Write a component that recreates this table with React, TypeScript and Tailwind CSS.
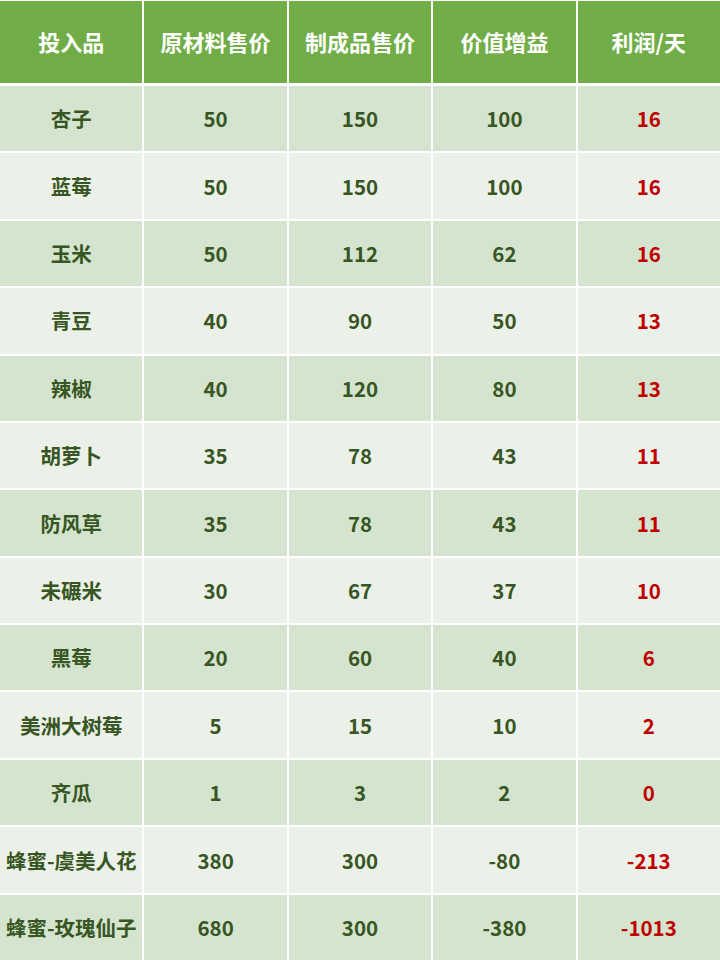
const headers = ["投入品", "原材料售价", "制成品售价", "价值增益", "利润/天"];

const rows: [string, number, number, number, number][] = [
  ["杏子", 50, 150, 100, 16],
  ["蓝莓", 50, 150, 100, 16],
  ["玉米", 50, 112, 62, 16],
  ["青豆", 40, 90, 50, 13],
  ["辣椒", 40, 120, 80, 13],
  ["胡萝卜", 35, 78, 43, 11],
  ["防风草", 35, 78, 43, 11],
  ["未碾米", 30, 67, 37, 10],
  ["黑莓", 20, 60, 40, 6],
  ["美洲大树莓", 5, 15, 10, 2],
  ["齐瓜", 1, 3, 2, 0],
  ["蜂蜜-虞美人花", 380, 300, -80, -213],
  ["蜂蜜-玫瑰仙子", 680, 300, -380, -1013],
];

export default function App() {
  return (
    <main
      className="flex h-[960px] w-[720px] flex-col bg-white pt-[1px] font-bold"
      style={{ fontFamily: '"Noto Sans CJK SC", "Noto Sans", sans-serif' }}
    >
      <div className="grid h-[82px] grid-cols-5 gap-x-[2px]">
        {headers.map((h) => (
          <div
            key={h}
            className="flex items-center justify-center bg-[#70ad47] pb-[2px] text-[22px] text-white"
          >
            {h}
          </div>
        ))}
      </div>

      <div className="mt-[3px] grid flex-1 grid-cols-5 grid-rows-[repeat(13,1fr)] gap-[2px]">
        {rows.map((row, i) =>
          row.map((cell, j) => (
            <div
              key={`${i}-${j}`}
              className={`flex items-center justify-center text-[20.5px] ${
                i % 2 === 0 ? "bg-[#d5e4ce]" : "bg-[#ebf1e8]"
              } ${j === 4 ? "text-[#c00000]" : "text-[#375623]"}`}
            >
              {cell}
            </div>
          ))
        )}
      </div>
    </main>
  );
}
